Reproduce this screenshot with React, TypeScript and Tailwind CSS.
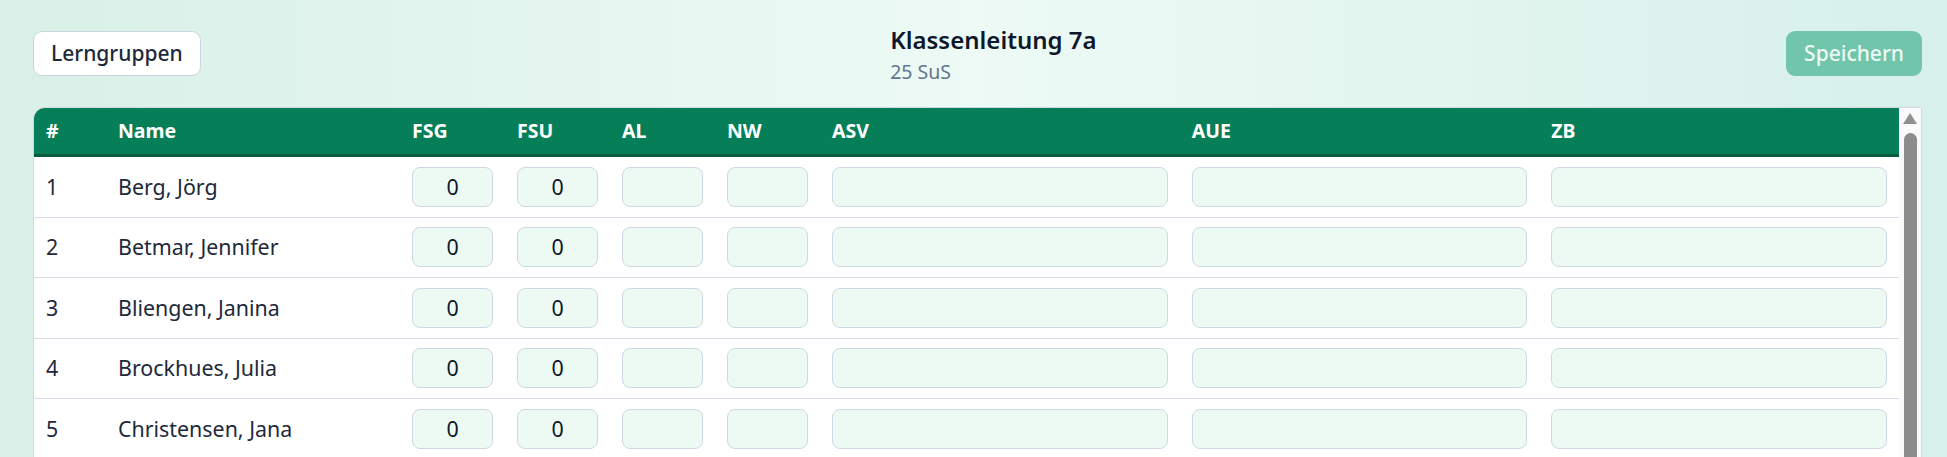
const students = [
  { nr: 1, name: 'Berg, Jörg' },
  { nr: 2, name: 'Betmar, Jennifer' },
  { nr: 3, name: 'Bliengen, Janina' },
  { nr: 4, name: 'Brockhues, Julia' },
  { nr: 5, name: 'Christensen, Jana' },
];

const columns = ['#', 'Name', 'FSG', 'FSU', 'AL', 'NW', 'ASV', 'AUE', 'ZB'];

const gridCols =
  'grid grid-cols-[72px_294px_105px_105px_105px_105px_1fr_1fr_1fr]';

const Field = ({ value }: { value?: string }) => (
  <div className="h-[40px] w-full rounded-[8px] border border-[#cdd8e4] bg-[#ecfaf3] flex items-center justify-center text-[21.4px] text-[#0f172a]">
    {value}
  </div>
);

const App = () => {
  return (
    <div className="h-screen overflow-hidden bg-gradient-to-r from-[#d8f0e7] via-[#edfaf5] to-[#d7f0ea] font-['Noto_Sans',sans-serif] text-[#0f172a]">
      <div className="pl-[33px] pr-[25px]">
        <div className="flex items-start justify-between pt-[31px]">
          <button className="h-[45px] px-[17px] rounded-[9px] border border-[#cbd5e1] bg-white text-[21px] font-medium text-[#1e293b] leading-none">
            Lerngruppen
          </button>
          <div className="-mt-[7px] flex flex-col">
            <h1 className="text-[24px] leading-[32px] font-semibold text-[#0f172a]">
              Klassenleitung 7a
            </h1>
            <span className="mt-[2px] text-[19.5px] leading-[28px] text-[#64748b]">
              25 SuS
            </span>
          </div>
          <button className="h-[45px] px-[18px] rounded-[9px] bg-[#71c5aa] text-[21px] font-medium text-[#eefaf5] leading-none">
            Speichern
          </button>
        </div>

        <div className="mt-[21px] flex rounded-tl-[12px] rounded-tr-[2px] border border-[#cfd8e3] bg-white overflow-hidden">
          <div className="flex-1">
            <div
              className={`${gridCols} h-[49px] items-center bg-[#067e57] border-b-[3px] border-[#075c40] text-white font-bold text-[19.5px]`}
            >
              {columns.map((c) => (
                <div key={c} className="px-[12px]">
                  {c}
                </div>
              ))}
            </div>
            {students.map((s) => (
              <div
                key={s.nr}
                className={`${gridCols} items-center py-[9.75px] border-b border-[#d3dce7] text-[21.4px] text-[#1e293b]`}
              >
                <div className="px-[12px]">{s.nr}</div>
                <div className="px-[12px]">{s.name}</div>
                <div className="px-[12px]">
                  <Field value="0" />
                </div>
                <div className="px-[12px]">
                  <Field value="0" />
                </div>
                <div className="px-[12px]">
                  <Field />
                </div>
                <div className="px-[12px]">
                  <Field />
                </div>
                <div className="px-[12px]">
                  <Field />
                </div>
                <div className="px-[12px]">
                  <Field />
                </div>
                <div className="px-[12px]">
                  <Field />
                </div>
              </div>
            ))}
          </div>
          <div className="w-[22px] bg-[#fafafa] flex flex-col items-center pt-[5px]">
            <svg width="14" height="11" viewBox="0 0 14 11">
              <polygon points="7,0 14,11 0,11" fill="#8f8f8f" />
            </svg>
            <div className="mt-[9px] w-[13px] h-[400px] rounded-full bg-[#8c8c8c]" />
          </div>
        </div>
      </div>
    </div>
  );
};

export default App;
